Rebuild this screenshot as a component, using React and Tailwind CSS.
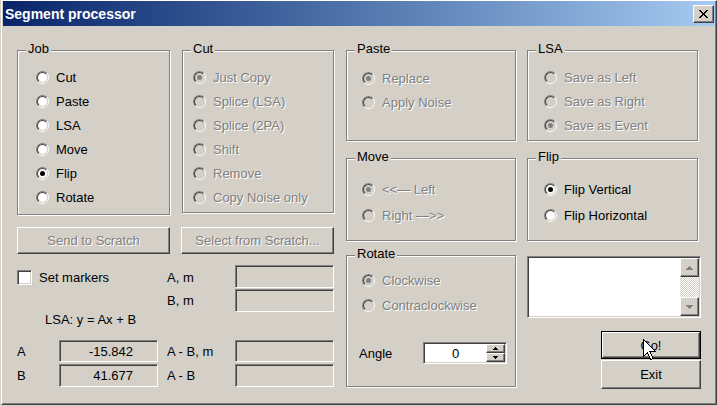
import React from 'react';

const DIS = 'text-[#808080] [text-shadow:1px_1px_0_#ffffff]';

function Raised({ className = '', children }) {
  return (
    <div className={`border border-t-white border-l-white border-r-[#404040] border-b-[#404040] shadow-[inset_-1px_-1px_0_#808080] bg-[#d4d0c8] flex items-center justify-center ${className}`}>
      {children}
    </div>
  );
}

function Sunken({ className = '', children }) {
  return (
    <div className={`border border-t-[#808080] border-l-[#808080] border-b-white border-r-white shadow-[inset_1px_1px_0_#404040,inset_-1px_-1px_0_#d4d0c8] ${className}`}>
      {children}
    </div>
  );
}

function Group({ title, className = '', children }) {
  return (
    <div className={`relative border border-[#808080] shadow-[inset_1px_1px_0_#ffffff,1px_1px_0_#ffffff] ${className}`}>
      <span className="absolute left-[8px] top-[-10px] px-[2px] bg-[#d4d0c8] leading-[15px]">{title}</span>
      {children}
    </div>
  );
}

function Radio({ label, checked, disabled, rowClass = 'h-[24px]' }) {
  return (
    <div className={`flex items-center gap-[7px] ${rowClass}`}>
      <span className="relative w-[13px] h-[13px] shrink-0 rounded-full border border-t-[#808080] border-l-[#808080] border-b-white border-r-white">
        <span className={`absolute inset-0 rounded-full border border-t-[#404040] border-l-[#404040] border-b-[#d4d0c8] border-r-[#d4d0c8] flex items-center justify-center ${disabled ? 'bg-[#d4d0c8]' : 'bg-white'}`}>
          {checked && <span className={`w-[5px] h-[5px] rounded-full ${disabled ? 'bg-[#808080]' : 'bg-black'}`} />}
        </span>
      </span>
      <span className={`leading-[15px] whitespace-nowrap ${disabled ? DIS : ''}`}>{label}</span>
    </div>
  );
}

function Arrow({ up, color = '#000000', w = 7, h = 4 }) {
  const pts = up ? `0,${h} ${w / 2},0 ${w},${h}` : `0,0 ${w / 2},${h} ${w},0`;
  return (
    <svg width={w} height={h} viewBox={`0 0 ${w} ${h}`} shapeRendering="crispEdges">
      <polygon points={pts} fill={color} />
    </svg>
  );
}

export default function App() {
  return (
    <div className="w-[718px] h-[406px] bg-[#d4d0c8] pl-px pr-px pb-px overflow-hidden font-['Liberation_Sans',Arial,sans-serif] text-[13px] text-black">
      <div className="h-full border-t border-l border-t-white border-l-white border-r border-b border-r-[#404040] border-b-[#404040]">
        <div className="h-full flex flex-col border-l border-l-[#d4d0c8] border-r border-r-[#808080] border-b border-b-[#808080]">
          {/* title bar */}
          <div className="h-[25px] shrink-0 flex items-center justify-between bg-linear-to-r from-[#0a246a] to-[#a6caf0] pl-[2px] pr-px">
            <span className="text-white font-bold text-[14px] leading-[17px] pt-px">Segment processor</span>
            <Raised className="w-[21px] h-[18px] mt-px">
              <svg width="9" height="8" viewBox="0 0 9 8" shapeRendering="crispEdges">
                <path d="M0 0h2l2.5 3 2.5-3h2L5.5 4 9 8H7L4.5 5 2 8H0l3.5-4z" fill="#000" />
              </svg>
            </Raised>
          </div>

          {/* body */}
          <div className="flex pl-[14px] pt-[24px]">
            {/* left column */}
            <div className="w-[317px] flex flex-col">
              <div className="flex items-start gap-[12px]">
                <Group title="Job" className="w-[153px] h-[165px] pt-[14px] pl-[18px]">
                  <Radio label="Cut" />
                  <Radio label="Paste" />
                  <Radio label="LSA" />
                  <Radio label="Move" />
                  <Radio label="Flip" checked />
                  <Radio label="Rotate" />
                </Group>
                <Group title="Cut" className="w-[152px] h-[163px] pt-[14px] pl-[10px]">
                  <Radio label="Just Copy" checked disabled />
                  <Radio label="Splice (LSA)" disabled />
                  <Radio label="Splice (2PA)" disabled />
                  <Radio label="Shift" disabled />
                  <Radio label="Remove" disabled />
                  <Radio label="Copy Noise only" disabled />
                </Group>
              </div>

              <div className="flex gap-[11px] mt-[12px]">
                <Raised className={`w-[153px] h-[27px] ${DIS}`}>Send to Scratch</Raised>
                <Raised className={`w-[153px] h-[27px] ${DIS}`}>Select from Scratch...</Raised>
              </div>

              <div className="flex items-center h-[23px] mt-[11px]">
                <div className="w-[150px] flex items-center gap-[7px] pt-[2px]">
                  <Sunken className="w-[15px] h-[15px] bg-white" />
                  <span className="leading-[15px]">Set markers</span>
                </div>
                <span className="w-[68px] leading-[15px] pt-[2px]">A, m</span>
                <Sunken className="w-[99px] h-[23px] bg-[#d4d0c8]" />
              </div>
              <div className="flex items-center h-[23px] mt-px">
                <div className="w-[150px]" />
                <span className="w-[68px] leading-[15px]">B, m</span>
                <Sunken className="w-[99px] h-[23px] bg-[#d4d0c8]" />
              </div>
              <div className="pl-[28px] leading-[15px]">LSA: y = Ax + B</div>

              <div className="flex items-center h-[22px] mt-[13px]">
                <span className="w-[42px] leading-[15px]">A</span>
                <Sunken className="w-[99px] h-[22px] bg-[#d4d0c8] flex items-center justify-end pr-[24px] leading-[15px]">-15.842</Sunken>
                <span className="w-[68px] ml-[9px] leading-[15px]">A - B, m</span>
                <Sunken className="w-[99px] h-[22px] bg-[#d4d0c8]" />
              </div>
              <div className="flex items-center h-[23px] mt-[2px]">
                <span className="w-[42px] leading-[15px]">B</span>
                <Sunken className="w-[99px] h-[23px] bg-[#d4d0c8] flex items-center justify-end pr-[24px] leading-[15px]">41.677</Sunken>
                <span className="w-[68px] ml-[9px] leading-[15px]">A - B</span>
                <Sunken className="w-[99px] h-[23px] bg-[#d4d0c8]" />
              </div>
            </div>

            {/* middle column */}
            <div className="w-[170px] ml-[12px] flex flex-col">
              <Group title="Paste" className="h-[91px] pt-[15px] pl-[15px]">
                <Radio label="Replace" checked disabled />
                <Radio label="Apply Noise" disabled />
              </Group>
              <Group title="Move" className="h-[83px] mt-[17px] pt-[17px] pl-[15px]">
                <Radio label="<<— Left" checked disabled rowClass="h-[26px]" />
                <Radio label="Right —>>" disabled rowClass="h-[26px]" />
              </Group>
              <Group title="Rotate" className="h-[132px] mt-[14px] pt-[12px] pl-[15px]">
                <Radio label="Clockwise" checked disabled rowClass="h-[25px]" />
                <Radio label="Contraclockwise" disabled rowClass="h-[25px]" />
                <div className="flex items-center h-[22px] mt-[24px] ml-[-3px]">
                  <span className="w-[64px] leading-[15px]">Angle</span>
                  <Sunken className="w-[84px] h-[22px] bg-white flex items-center pl-px pr-px">
                    <span className="flex-1 text-center leading-[15px]">0</span>
                    <div className="w-[19px] h-[18px] flex flex-col">
                      <Raised className="h-[9px] w-full">
                        <Arrow up w={5} h={3} />
                      </Raised>
                      <Raised className="h-[9px] w-full">
                        <Arrow w={5} h={3} />
                      </Raised>
                    </div>
                  </Sunken>
                </div>
              </Group>
            </div>

            {/* right column */}
            <div className="w-[174px] ml-[11px] flex flex-col">
              <Group title="LSA" className="w-[171px] h-[91px] pt-[14px] pl-[16px]">
                <Radio label="Save as Left" disabled />
                <Radio label="Save as Right" disabled />
                <Radio label="Save as Event" checked disabled />
              </Group>
              <Group title="Flip" className="w-[171px] h-[83px] mt-[17px] pt-[17px] pl-[16px]">
                <Radio label="Flip Vertical" checked rowClass="h-[26px]" />
                <Radio label="Flip Horizontal" rowClass="h-[26px]" />
              </Group>
              <Sunken className="w-[174px] h-[62px] mt-[15px] bg-white flex justify-end p-px">
                <div className="w-[19px] h-full flex flex-col">
                  <Raised className="h-[19px] w-full">
                    <Arrow up color="#808080" />
                  </Raised>
                  <div className="flex-1 bg-[repeating-conic-gradient(#ffffff_0%_25%,#d4d0c8_0%_50%)] bg-[length:2px_2px]" />
                  <Raised className="h-[19px] w-full">
                    <Arrow color="#808080" />
                  </Raised>
                </div>
              </Sunken>
              <div className="relative w-[100px] h-[28px] ml-[74px] mt-[13px] border border-black">
                <Raised className="w-full h-full leading-[15px]">Go!</Raised>
                <svg className="absolute left-[41px] top-[7px]" width="13" height="22" viewBox="0 0 13 22" shapeRendering="crispEdges">
                  <path d="M0.5 0.5V17.5L4.5 13.5L7.5 20.5L10 19.5L7 12.5H12.5Z" fill="#ffffff" stroke="#000000" strokeWidth="1" />
                </svg>
              </div>
              <Raised className="w-[100px] h-[29px] ml-[74px] mt-px leading-[15px]">Exit</Raised>
            </div>
          </div>
        </div>
      </div>
    </div>
  );
}
